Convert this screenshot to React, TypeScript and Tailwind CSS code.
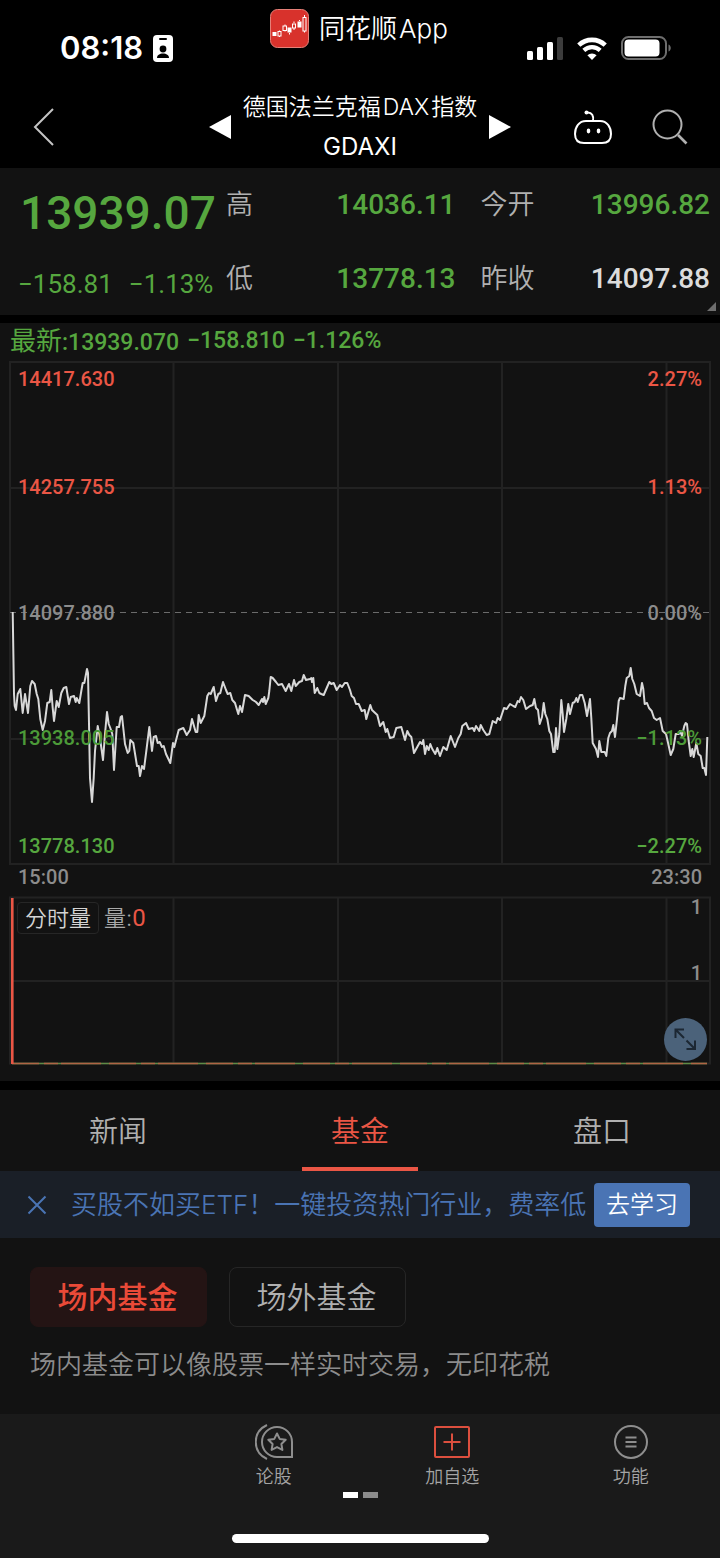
import { useState } from "react";

interface Quote {
  label: string;
  value: string;
  color: string;
}

const quotes: Quote[] = [
  { label: "高", value: "14036.11", color: "text-[#56a73f]" },
  { label: "今开", value: "13996.82", color: "text-[#56a73f]" },
  { label: "低", value: "13778.13", color: "text-[#56a73f]" },
  { label: "昨收", value: "14097.88", color: "text-[#dcdcdc]" },
];

const tabs = ["新闻", "基金", "盘口"];
const fundTypes = ["场内基金", "场外基金"];

const levels = [
  { top: "top-[6px]", price: "14417.630", rate: "2.27%", color: "text-[#ea5645]" },
  { top: "top-[114px]", price: "14257.755", rate: "1.13%", color: "text-[#ea5645]" },
  { top: "top-[240px]", price: "14097.880", rate: "0.00%", color: "text-[#8c8c8c]" },
  { top: "top-[365px]", price: "13938.005", rate: "−1.13%", color: "text-[#4c9a38]" },
  { top: "top-[473px]", price: "13778.130", rate: "−2.27%", color: "text-[#56a73f]" },
];

const trend =
  "12.7,611 14,693 14.7,705 16,709 17.7,693 20.3,688 22.7,712 25,693 28,712 30.3,685 32,680 34.7,683 36.7,693 38.3,698 40.3,718 42.7,729 45,720 47.3,702 49.7,701 51.3,689 52.7,707 54,720 56.7,700 58.7,706 61.3,692 63.7,687 66.3,686 69,703 70.7,696 74,695 75.7,701 76.7,697 79.3,702 81.3,690 82.7,682 84.3,682 87,668 88,672 89,723 90,777 92,801 93.7,777 95,750 97.7,725 100,737 103,759 105,733 107,711 108.7,723 110.3,727 112.3,733 114,769 116.7,726 119,726 120.7,716 122,715 125,743 127.7,752 129.3,750 130.3,739 133.3,742 137,765 138.7,765 140,775 142,765 144,768 146.7,747 149.3,726 152,750 153.7,736 156,735 157.7,742 159.7,741 162,746 163.7,745 166,753 170.3,762 173,742 174.3,746 178.7,729 183.3,727 186.7,734 190,729 192,718 195.7,731 197.3,731 198.7,714 200.7,722 204.3,715 207.3,695 209,692 210.7,693 213.7,686 216,700 218.3,693 220.3,692 223,681 226,689 227.7,693 230.3,692 232.3,699 235,702 238.3,713 240,705 242,711 245,694 248.7,695 252.7,699 256,701 258.7,704 262,698 263,701 264.3,696 265.7,703 268.3,697 269.3,690 270.7,676 272.7,677 276,681 278.3,684 282,683 285.7,690 289,683 291.3,690 294,679 295.7,685 299.3,681 302,680 303.7,674 306,679 310,678 311.3,677 312,681 313.3,677 314.7,692 317.3,687 319.3,692 321.3,693 323.7,694 326.7,687 329.3,681 331.3,683 333.7,682 336.7,689 340,684 342,686 344.7,682 347.3,682 350,689 351.7,695 354,697 356,703 358.7,703 361.7,710 364.7,709 366.3,718 368,712 370.3,704 372,709 377.3,714 380,725 383.3,721 385.7,731 387.3,728 390,737 393.7,736 396.3,727 401.3,726 405,739 407.3,730 409.3,734 411.3,736 414,752 416.7,747 420,741 422,743 423.3,739 425,753 426.7,745 428.7,749 430.3,743 432.3,748 435.3,753 437.3,747 440,755 443.3,746 446.7,749 450.7,735 455,746 458.3,737 460.7,733 462.3,725 466,722 468.7,728 472.7,727 474.3,730 476,725 479.3,730 480.7,724 483.3,729 486.7,734 489.3,733 492.7,720 496,722 497.7,717 500,719 504,707 506.7,708 510,703 513.3,705 515.3,706 517.7,700 519.3,701 521,696 523.3,699 526,708 530,705 532.7,704 534.3,698 536,707 538,709 539.7,723 542,716 543.7,702 545.3,713 547.3,718 549.3,730 551,733 553.3,751 554.7,751 556,727 557.3,748 559.3,733 561.3,699 562.7,713 564,731 566.3,718 568.3,703 570,713 572.7,702 574.7,701 576.3,697 577.7,701 580,694 582.3,694 584.7,702 587,715 590,698 591.3,717 592.7,742 596,748 598,756 599.3,740 601.3,751 604.7,751 606.3,755 608.3,737 610,732 612,730 613.3,724 615,736 617,718 618.7,700 620,697 623.7,698 625.3,685 626.7,677 629.3,675 630.7,667 632.3,678 634.3,683 636.7,693 640,695 642,682 643.3,688 644.7,703 647,702 649,707 651.7,710 654,717 656.7,719 660,717 662.7,730 666,733 668.3,743 670.7,754 673.3,748 675.7,733 678.7,733 680,730 682,735 684.3,725 685.7,722 687,723 688.7,740 690.7,755 692.3,748 693.7,756 696.3,742 698.3,753 700.7,755 702.7,767 704.3,767 706,774 707.3,736";

const StatusBar = () => (
  <div className="grid grid-cols-3 h-[87px]">
    <div className="flex items-center gap-[10px] pl-[60px] pt-[9px]">
      <span className="font-['Inter',sans-serif] text-[31px] leading-[40px] font-semibold">
        08:18
      </span>
      <svg width="20" height="27" viewBox="0 0 20 27">
        <rect width="20" height="27" rx="4" fill="#fff" />
        <rect x="6" y="3" width="8" height="2" rx="1" fill="#000" />
        <circle cx="10" cy="14" r="3.4" fill="#000" />
        <path d="M4 23c0-3 2.6-4.6 6-4.6s6 1.600 6 4.600z" fill="#000" />
      </svg>
    </div>
    <div className="flex justify-center gap-[10px] pt-[9px] pr-0.5">
      <svg width="39" height="39" viewBox="0 0 39 39" className="shrink-0">
        <rect x=".5" y=".5" width="38" height="38" rx="7" fill="#d8322c" stroke="#e58078" />
        <g fill="#fff">
          <rect x="2.500" y="23" width="4" height="4" />
          <rect x="17.500" y="18.500" width="4" height="5" />
          <rect x="27.500" y="12.500" width="4" height="6" />
        </g>
        <g fill="none" stroke="#fff">
          <path d="M9.500 22.500v-1M9.500 27v1M15 17v-1.500M24 14v-1.500M24 19v2M19.500 24v1.500M29.500 12v-1M34.500 8V6M34.500 22v1.500M15 21v1.500" />
          <rect x="8" y="22.500" width="3" height="4.500" />
          <rect x="13" y="17" width="3.500" height="4.500" />
          <rect x="22.500" y="15" width="3" height="4" />
          <rect x="33" y="8.500" width="3" height="13.500" />
        </g>
      </svg>
      <span className="flex gap-0.5 text-[26px] leading-[40px] font-[350] whitespace-nowrap">
        <span>同花顺</span>
        <span>App</span>
      </span>
    </div>
    <div className="flex items-center justify-end gap-[14px] pr-[49px] pt-[9px]">
      <svg width="36" height="23" viewBox="0 0 36 23">
        <rect x="0" y="14" width="6" height="9" rx="1.500" fill="#fff" />
        <rect x="10" y="10" width="6" height="13" rx="1.500" fill="#fff" />
        <rect x="20" y="5" width="6" height="18" rx="1.500" fill="#fff" />
        <rect x="30" y="0" width="6" height="23" rx="1.500" fill="#3c3c3c" />
      </svg>
      <svg width="30" height="23" viewBox="0 0 30 23" fill="none" stroke="#fff">
        <path d="M1.800 8.200a19 19 0 0 1 26.400 0" strokeWidth="4.600" />
        <path d="M6.800 13.400a12 12 0 0 1 16.400 0" strokeWidth="4.200" />
        <path d="M15 23l-4.600-4.800a6.800 6.800 0 0 1 9.200 0z" fill="#fff" stroke="none" />
      </svg>
      <svg width="50" height="24" viewBox="0 0 50 24">
        <rect x="1" y="1" width="44" height="22" rx="6.500" fill="none" stroke="#6e6e6e" strokeWidth="2" />
        <rect x="3.500" y="3.500" width="35" height="17" rx="4" fill="#fff" />
        <path d="M47.500 8.500c3 1.200 3 5.800 0 7z" fill="#6e6e6e" />
      </svg>
    </div>
  </div>
);

const Header = () => (
  <header className="grid grid-cols-[1fr_auto_1fr] items-center h-[80px] mb-px text-white">
    <div className="pl-[33px]">
      <button type="button" aria-label="返回" className="block">
        <svg width="21" height="38" viewBox="0 0 21 38" fill="none" stroke="#c4c4c4" strokeWidth="2">
          <path d="M20 1L2 19l18 18" />
        </svg>
      </button>
    </div>
    <div className="flex items-center gap-3">
      <button type="button" aria-label="上一个" className="block">
        <svg width="22" height="24" viewBox="0 0 22 24" fill="#fff">
          <path d="M22 0v24L0 12z" />
        </svg>
      </button>
      <h1 className="text-center leading-[40px]">
        <span className="flex gap-0.5 text-[23px] font-[350]">
          <span>德国法兰克福</span>
          <span>DAX</span>
          <span>指数</span>
        </span>
        <span className="block font-['Inter',sans-serif] text-[24px]">GDAXI</span>
      </h1>
      <button type="button" aria-label="下一个" className="block">
        <svg width="22" height="24" viewBox="0 0 22 24" fill="#fff">
          <path d="M0 0v24l22-12z" />
        </svg>
      </button>
    </div>
    <div className="flex items-center justify-end gap-10 pr-[32px]">
      <button type="button" aria-label="智能助手">
        <svg width="38" height="36" viewBox="0 0 38 36" fill="none" stroke="#fff" strokeWidth="2">
          <path d="M12 12h14c7 0 11 6 11 13 0 6-3 9-9 9H10c-6 0-9-3-9-9 0-7 4-13 11-13z" />
          <path d="M19 12c1-5-1-9-6-8.500" />
          <circle cx="12.500" cy="3.500" r="2" fill="#fff" stroke="none" />
          <ellipse cx="14.500" cy="22" rx="1.800" ry="2.400" fill="#fff" stroke="none" />
          <ellipse cx="24.500" cy="22" rx="1.800" ry="2.400" fill="#fff" stroke="none" />
        </svg>
      </button>
      <button type="button" aria-label="搜索">
        <svg width="36" height="36" viewBox="0 0 36 36" fill="none" stroke="#b0b0b0" strokeWidth="2">
          <circle cx="15.500" cy="15.500" r="14" />
          <path d="M26 26l8.500 8.500" strokeWidth="2.600" />
        </svg>
      </button>
    </div>
  </header>
);

const QuotePanel = () => (
  <section className="relative grid grid-cols-[208px_1fr] bg-[#121212] h-[147px] pl-[18px] pr-[10px]">
    <div className="font-['Roboto',sans-serif] font-medium text-[#56a73f]">
      <div className="text-[46px] leading-[56px] pl-[2px] pt-[17px]">13939.07</div>
      <div className="flex gap-4 text-[26px] leading-[32px] pt-[27px] font-normal">
        <span>−158.81</span>
        <span>−1.13%</span>
      </div>
    </div>
    <dl className="grid grid-cols-2 content-start gap-x-[25px] gap-y-[34px] pt-[17px]">
      {quotes.map((q) => (
        <div key={q.label} className="flex justify-between items-center text-[27px] leading-[40px]">
          <dt className="font-[350] text-[#b0b0b0]">{q.label}</dt>
          <dd className={`font-['Roboto',sans-serif] text-[28px] font-medium ${q.color}`}>{q.value}</dd>
        </div>
      ))}
    </dl>
    <svg width="9" height="9" viewBox="0 0 9 9" className="absolute right-1 bottom-1">
      <path d="M9 0v9H0z" fill="#6e6e6e" />
    </svg>
  </section>
);

const TrendChart = () => (
  <div className="relative h-[503px]">
    <svg
      className="block w-full h-full overflow-visible"
      viewBox="10 360 700 503"
      preserveAspectRatio="none"
      fill="none"
    >
      <path
        d="M10 361H710V863H10ZM10 487H710M10 738H710M173.500 361V862M338 361V862M502 361V862M666.500 361V862"
        stroke="#222"
        strokeWidth="2"
      />
      <path d="M10 611.500H710" stroke="#6b6b6b" strokeWidth="1.200" strokeDasharray="6 5" />
      <polyline points={trend} stroke="#d8d8d8" strokeWidth="2" strokeLinejoin="round" />
    </svg>
    {levels.map((l) => (
      <div
        key={l.price}
        className={`absolute inset-x-2 flex justify-between font-['Roboto',sans-serif] text-[20px] leading-[24px] font-medium ${l.top} ${l.color}`}
      >
        <span>{l.price}</span>
        <span>{l.rate}</span>
      </div>
    ))}
  </div>
);

const VolumeChart = () => (
  <div className="relative h-[167px]">
    <svg
      className="block w-full h-full overflow-visible"
      viewBox="10 896 700 167"
      preserveAspectRatio="none"
      fill="none"
    >
      <path
        d="M10 896.500H710V1062.500H10ZM10 980H710M173.500 897V1062M338 897V1062M502 897V1062M666.500 897V1062"
        stroke="#222"
        strokeWidth="2"
      />
      <path d="M12 1062.500H707" stroke="#5f8a45" strokeWidth="1.600" />
      <path d="M12 1062.500H707" stroke="#b06445" strokeWidth="1.600" strokeDasharray="27 5 14 3 40 8" />
      <path d="M12.300 897V1063" stroke="#ea5645" strokeWidth="2.600" />
    </svg>
    <div className="absolute left-[7px] top-[5px] flex items-center gap-[5px] text-[22px] leading-[30px]">
      <button type="button" className="border border-[#262626] rounded bg-[#121212] px-[7px] font-[350] text-[#d4d4d4]">
        分时量
      </button>
      <span className="text-[#a8a8a8] font-[350]">
        量:<span className="font-['Roboto',sans-serif] text-[24px] font-normal text-[#ea5645]">0</span>
      </span>
    </div>
    <div className="absolute right-2 top-0 flex flex-col gap-[46px] font-['Roboto',sans-serif] text-[20px] leading-[20px] font-medium text-[#8c8c8c]">
      <span>1</span>
      <span>1</span>
    </div>
    <button
      type="button"
      aria-label="全屏"
      className="absolute right-[3px] bottom-[3px] w-[43px] h-[43px] rounded-full bg-[#4b627a]"
    >
      <svg viewBox="0 0 43 43" fill="none" stroke="#1c2733" strokeWidth="2">
        <path d="M20 20l-8-8M11.500 20v-8.500H20M22.500 22.500l8 8M31 22.500V31h-8.500" />
      </svg>
    </button>
  </div>
);

const navIcons = {
  discuss: (
    <svg width="38" height="36" viewBox="0 0 38 36" fill="none" stroke="#8e8e8e" strokeWidth="2">
      <path d="M12 1C-3 8-3 28 12 35" />
      <path d="M37 33H22A15 15 0 1 1 37 18Z" />
      <path
        d="M22 9.500l2.700 5.400 6 .9-4.300 4.200 1 5.900-5.400-2.800-5.400 2.800 1-5.900-4.300-4.200 6-.9z"
        strokeLinejoin="round"
      />
    </svg>
  ),
  add: (
    <svg width="36" height="36" viewBox="0 0 36 36" fill="none" stroke="#dc4f3e" strokeWidth="2">
      <rect x="1" y="3" width="34" height="30" rx="1" />
      <path d="M18 9.500v17M9.500 18h17" />
    </svg>
  ),
  more: (
    <svg width="36" height="36" viewBox="0 0 36 36" fill="none" stroke="#8e8e8e" strokeWidth="2">
      <circle cx="18" cy="18" r="16" />
      <path d="M12.500 13.500h11M12.500 18h11M12.500 22.500h11" />
    </svg>
  ),
};

const BottomNav = () => (
  <nav className="mt-auto bg-[#1a1a1a] pt-[10px] pb-[15px]">
    <div className="grid grid-cols-4 pl-[6px] text-[18px] leading-[26px] font-[350] text-[#a4a4a4]">
      <button type="button" className="col-start-2 flex flex-col items-center gap-1">
        {navIcons.discuss}
        论股
      </button>
      <button type="button" className="flex flex-col items-center gap-1">
        {navIcons.add}
        加自选
      </button>
      <button type="button" className="flex flex-col items-center gap-1">
        {navIcons.more}
        功能
      </button>
    </div>
    <div className="flex justify-center gap-[5px] pt-[2px]">
      <span className="w-[15px] h-[6px] bg-white" />
      <span className="w-[15px] h-[6px] bg-[#8c8c8c]" />
    </div>
    <div className="mx-auto mt-9 w-[257px] h-[9px] rounded-full bg-white" />
  </nav>
);

const App = () => {
  const [tab, setTab] = useState("基金");
  const [fund, setFund] = useState("场内基金");
  const [showNotice, setShowNotice] = useState(true);

  return (
    <div className="flex flex-col min-h-screen bg-[#121212] text-white font-['Inter','Noto_Sans_CJK_SC',sans-serif]">
      <div className="flow-root bg-black">
        <StatusBar />
        <Header />
      </div>

      <QuotePanel />

      <section className="border-t-[8px] border-b-[9px] border-black px-[10px] pb-[17px]">
        <p className="flex gap-2 font-['Roboto','Noto_Sans_CJK_SC',sans-serif] text-[23px] leading-[36px] font-medium text-[#56a73f] whitespace-nowrap">
          <span>
            <span className="text-[26px] font-normal">最新</span>:13939.070
          </span>
          <span>−158.810</span>
          <span>−1.126%</span>
        </p>
        <TrendChart />
        <div className="flex justify-between px-2 pb-[6px] font-['Roboto',sans-serif] text-[20px] leading-[27px] font-medium text-[#8c8c8c]">
          <span>15:00</span>
          <span>23:30</span>
        </div>
        <VolumeChart />
      </section>

      <div role="tablist" className="flex justify-between px-[60px]">
        {tabs.map((t) => (
          <button
            key={t}
            type="button"
            role="tab"
            aria-selected={tab === t}
            onClick={() => setTab(t)}
            className={`w-[116px] h-[81px] pt-[6px] text-[29px] font-[350] border-b-4 ${
              tab === t
                ? "text-[#ea5645] border-[#ea5645]"
                : "text-[#b0b0b0] border-transparent"
            }`}
          >
            {t}
          </button>
        ))}
      </div>

      {showNotice && (
        <div className="flex items-center h-[67px] bg-[#1a1f27] pl-[27px] pr-[30px]">
          <button type="button" aria-label="关闭" onClick={() => setShowNotice(false)}>
            <svg width="20" height="20" viewBox="0 0 20 20" fill="none" stroke="#4a74b4" strokeWidth="2">
              <path d="M1.500 1.500l17 17M18.500 1.500l-17 17" />
            </svg>
          </button>
          <p className="ml-6 text-[26px] leading-[40px] text-[#4a74b4] font-[350] whitespace-nowrap">
            买股不如买ETF！一键投资热门行业，费率低
          </p>
          <a
            href="#learn"
            className="ml-auto w-[96px] rounded bg-[#4a74b4] text-center text-[24px] leading-[44px] font-[350] text-white"
          >
            去学习
          </a>
        </div>
      )}

      <section className="px-[30px] pt-[29px] pb-7">
        <div className="flex gap-[22px]">
          {fundTypes.map((f) => (
            <button
              key={f}
              type="button"
              onClick={() => setFund(f)}
              className={`w-[177px] h-[60px] rounded-lg border pr-[2px] text-[30px] ${
                fund === f
                  ? "bg-[#241414] border-[#241414] text-[#ea4a38] font-medium"
                  : "border-[#262626] text-[#b0b0b0] font-[350]"
              }`}
            >
              {f}
            </button>
          ))}
        </div>
        <p className="pt-[18px] text-[26px] leading-[40px] text-[#8c8c8c] font-[350]">
          场内基金可以像股票一样实时交易，无印花税
        </p>
      </section>

      <BottomNav />
    </div>
  );
};

export default App;
